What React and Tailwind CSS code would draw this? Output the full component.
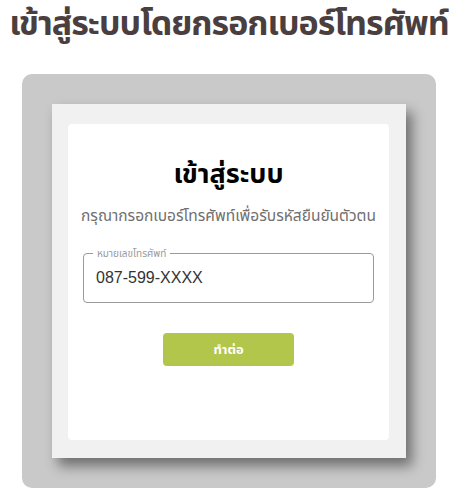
export default function App() {
  return (
    <div className="w-[458px] h-[489px] bg-white font-['Noto_Sans','Noto_Sans_Thai',sans-serif] overflow-hidden">
      <h1 className="text-center text-[34px] leading-[44px] font-bold text-[#4a3e3f] tracking-[-1px] whitespace-nowrap">
        เข้าสู่ระบบโดยกรอกเบอร์โทรศัพท์
      </h1>

      <div className="mx-[22px] mt-[30px] h-[414px] w-[414px] rounded-[10px] bg-[#c9c9c9] pt-[30px] pl-[30px]">
        <div className="w-[354px] h-[354px] bg-[#f1f1f1] pt-5 pl-4 pr-[17px] pb-[18px] shadow-[6px_8px_12px_rgba(0,0,0,0.45)]">
          <div className="h-[316px] rounded bg-white flex flex-col items-center">
            <h2 className="mt-[30px] text-[27px] leading-[38px] font-bold text-black">เข้าสู่ระบบ</h2>
            <p className="mt-[12px] text-[15.5px] leading-[22px] text-[#707070] whitespace-nowrap">
              กรุณากรอกเบอร์โทรศัพท์เพื่อรับรหัสยืนยันตัวตน
            </p>
            <div className="relative mt-[27px] w-[291px] h-[50px] rounded border-[1.5px] border-[#9a9a9a] flex items-center px-3">
              <span className="absolute -top-[8px] left-[9px] bg-white px-1 text-[10px] leading-[14px] text-[#9a9a9a]">
                หมายเลขโทรศัพท์
              </span>
              <span className="text-[16px] text-[#333] font-['Liberation_Sans',sans-serif]">087-599-XXXX</span>
            </div>
            <button className="mt-[30px] w-[131px] h-[33px] rounded bg-[#b3c64c] text-white text-[13px] font-bold">
              ทำต่อ
            </button>
          </div>
        </div>
      </div>
    </div>
  );
}
